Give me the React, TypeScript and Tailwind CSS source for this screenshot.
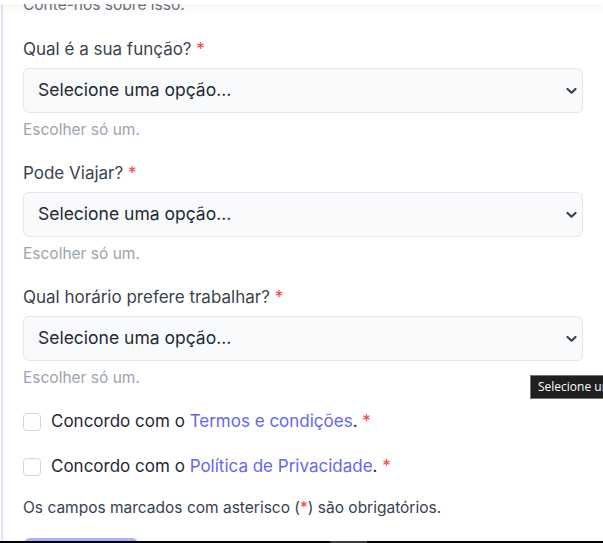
import React from 'react';

const grupos = [
  { label: "Qual é a sua função?" },
  { label: "Pode Viajar?" },
  { label: "Qual horário prefere trabalhar?" },
];

function Chevron() {
  return (
    <svg width="11" height="7" viewBox="0 0 11 7" fill="none" className="absolute right-[5px] top-1/2 -translate-y-1/2">
      <path d="M1.5 1.5 L5.5 5.2 L9.5 1.5" stroke="#374151" strokeWidth="2.2" strokeLinecap="round" strokeLinejoin="round" />
    </svg>
  );
}

export default function App() {
  return (
    <div className="relative h-[543px] overflow-hidden bg-white font-['Inter',sans-serif]">
      {/* header collant, seule l'ombre est visible */}
      <div className="fixed top-0 left-0 right-0 h-[4px] bg-white shadow-[0_3px_8px_rgba(0,0,0,0.08)] z-10"></div>

      <div className="ml-[1px] border-l-2 border-[#dbe4f6] min-h-[543px] pl-[20px] pr-[20px]">
        <p className="-mt-[6px] text-[15.5px] leading-[22px] text-[#6b7280]">Conte-nos sobre isso.</p>

        {grupos.map((g, i) => (
          <div key={g.label} className={i === 0 ? "mt-[21px]" : "mt-[20px]"}>
            <label className="block text-[17px] leading-6 text-[#3b4350]">
              {g.label} <span className="text-[#ef4444]">*</span>
            </label>
            <div className="relative mt-[7px] h-[45px] rounded-md border border-[#e5e7eb] bg-[#f9fafb] flex items-center pl-[14px] pr-[10px]">
              <span className="text-[17.5px] text-[#1f2937]">Selecione uma opção...</span>
              <Chevron />
            </div>
            <p className="mt-[6px] text-[15.5px] leading-[22px] text-[#9ca3af]">Escolher só um.</p>
          </div>
        ))}

        <div className="mt-[21px] flex items-center h-6 gap-[10px]">
          <span className="w-[18px] h-[18px] rounded-[4px] border border-[#d1d5db] bg-white"></span>
          <span className="text-[17px] text-[#1f2937]">
            Concordo com o <span className="text-[#6366f1]">Termos e condições</span>. <span className="text-[#ef4444]">*</span>
          </span>
        </div>
        <div className="mt-[21px] flex items-center h-6 gap-[10px]">
          <span className="w-[18px] h-[18px] rounded-[4px] border border-[#d1d5db] bg-white"></span>
          <span className="text-[17px] text-[#1f2937]">
            Concordo com o <span className="text-[#6366f1]">Política de Privacidade</span>. <span className="text-[#ef4444]">*</span>
          </span>
        </div>

        <p className="mt-[18px] text-[15.5px] leading-[22px] text-[#374151]">
          Os campos marcados com asterisco (<span className="text-[#ef4444]">*</span>) são obrigatórios.
        </p>

        <button className="mt-[19px] ml-[1px] w-[114px] h-[40px] rounded-md bg-[#a5b4fc]"></button>
      </div>

      {/* tooltip natif du select */}
      <div className="absolute left-[530px] top-[375px] h-[24px] flex items-center whitespace-nowrap bg-[#1f1f1f] border border-[#767676] pl-[7px] pr-[7px] text-[12px] text-white font-['Open_Sans',sans-serif]">
        Selecione uma opção...
      </div>

      {/* barre du bas */}
      <div className="fixed bottom-0 left-0 right-0 h-[2px] bg-black z-10">
        <div className="ml-[330px] w-[37px] h-full bg-[#3a3a3a]"></div>
      </div>
    </div>
  );
}
